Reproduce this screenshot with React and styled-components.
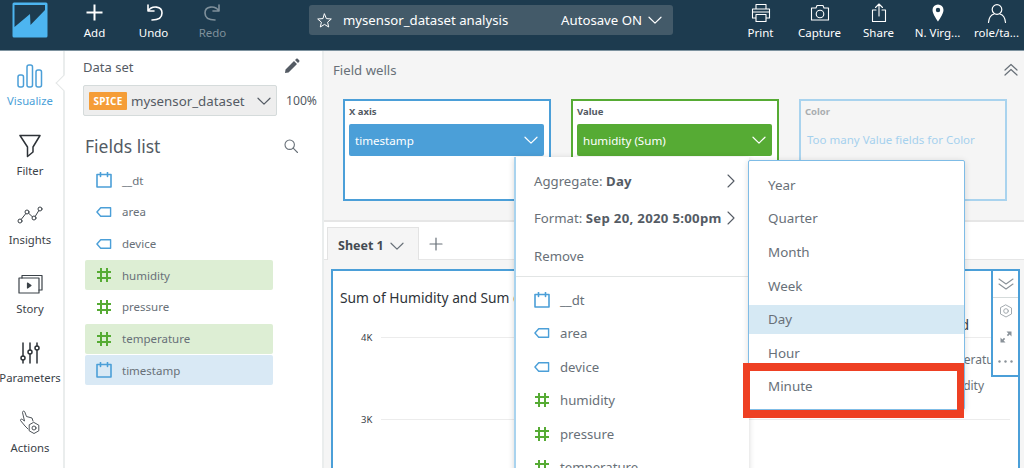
import React from 'react';
import styled, { createGlobalStyle } from 'styled-components';

const GlobalStyle = createGlobalStyle`
  html, body {
    margin: 0;
    padding: 0;
    width: 1024px;
    height: 468px;
    overflow: hidden;
    background: #fff;
    font-family: "Noto Sans", "Open Sans", sans-serif;
    color: #545b64;
  }
  * { box-sizing: border-box; }
`;

const Svg = ({ w, h, vb, children, color = 'currentColor', sw = 1.5 }) => (
  <svg width={w} height={h} viewBox={vb || `0 0 ${w} ${h}`} fill="none" stroke={color} strokeWidth={sw} strokeLinecap="round" strokeLinejoin="round">
    {children}
  </svg>
);

const Chevron = ({ size = 14, color = '#545b64', sw = 1.2 }) => (
  <Svg w={size} h={size} color={color} sw={sw}>
    <path d={`M1 ${size * 0.3} L${size / 2} ${size * 0.72} L${size - 1} ${size * 0.3}`} />
  </Svg>
);

const RightChevron = () => (
  <Svg w={8} h={14} color="#545b64" sw={1.1}>
    <path d="M1 1 L7 7 L1 13" />
  </Svg>
);

const CalendarIcon = () => (
  <Svg w={16} h={16} color="#4b9fd8" sw={1.6}>
    <path d="M1 2.5 H15 V15 H1 Z M4.5 .5 V4.5 M11.5 .5 V4.5" />
  </Svg>
);

const TagIcon = () => (
  <Svg w={17} h={12} color="#4b9fd8" sw={1.5}>
    <path d="M5 1.5 H15.5 V10.5 H5 L1 6 Z" />
  </Svg>
);

const HashIcon = () => (
  <Svg w={16} h={16} color="#56ab34" sw={2}>
    <path d="M5 1 V15 M11 1 V15 M1 5 H15 M1 11 H15" strokeLinecap="butt" />
  </Svg>
);

const FIELD_ICONS = { date: CalendarIcon, tag: TagIcon, num: HashIcon };

const FIELDS = [
  { name: '__dt', type: 'date' },
  { name: 'area', type: 'tag' },
  { name: 'device', type: 'tag' },
  { name: 'humidity', type: 'num', tint: 'green' },
  { name: 'pressure', type: 'num' },
  { name: 'temperature', type: 'num', tint: 'green' },
  { name: 'timestamp', type: 'date', tint: 'blue' },
];

const Page = styled.div`
  position: relative;
  width: 1024px;
  height: 468px;
  overflow: hidden;
  display: flex;
  flex-direction: column;
`;

/* top bar */
const Header = styled.header`
  height: 51px;
  flex: none;
  background: #1d3b4f;
  border-bottom: 1px solid #7d929f;
  display: flex;
  align-items: flex-start;
  padding-left: 12px;
  color: #fff;
`;

const Logo = styled.div`
  width: 36px;
  height: 36px;
  margin-top: 2px;
  margin-right: 17px;
  flex: none;
`;

const ToolButton = styled.div`
  width: 59px;
  flex: none;
  height: 50px;
  display: flex;
  flex-direction: column;
  align-items: center;
  font-size: 11.5px;
  white-space: nowrap;
  color: ${p => (p.$muted ? '#7f909b' : '#fff')};
`;

const ToolIcon = styled.div`
  height: 25px;
  display: flex;
  align-items: center;
  justify-content: center;
`;

const TitlePill = styled.div`
  width: 364px;
  height: 30px;
  margin: 5px 58px 0 67px;
  flex: none;
  background: #435a69;
  border-radius: 3px;
  display: flex;
  align-items: center;
  padding: 0 11px 0 8px;
  font-size: 13.2px;
`;

const TitleName = styled.span`
  margin-left: 11px;
  flex: 1;
`;

const AutoSave = styled.span`
  display: flex;
  align-items: center;
  gap: 6px;
`;

/* body */
const Body = styled.div`
  flex: 1;
  display: flex;
  min-height: 0;
`;

const Sidebar = styled.nav`
  position: relative;
  width: 65px;
  flex: none;
  padding-right: 3px;
  border-right: 2px solid #eaeded;
`;

const NavItem = styled.div`
  position: relative;
  height: 69.3px;
  display: flex;
  flex-direction: column;
  align-items: center;
  justify-content: flex-end;
  padding-bottom: 12px;
  font-size: 11.3px;
  white-space: nowrap;
  color: ${p => (p.$active ? '#4b9fd8' : '#3b4248')};
  ${p => p.$active && `
    &::after {
      content: '';
      position: absolute;
      right: -10px;
      top: 26px;
      width: 11px;
      height: 11px;
      background: #fff;
      border-left: 1px solid #e3e6e6;
      border-bottom: 1px solid #e3e6e6;
      transform: rotate(45deg);
    }
  `}
`;

const NavIcon = styled.div`
  height: 34px;
  display: flex;
  align-items: center;
  justify-content: center;
`;

const DataPanel = styled.aside`
  width: 257px;
  flex: none;
  padding: 6px 5px 0 18px;
`;

const PanelRow = styled.div`
  display: flex;
  align-items: center;
  justify-content: space-between;
  margin-top: ${p => p.$top || 0}px;
`;

const PanelLabel = styled.span`
  font-size: 13px;
  color: #545b64;
  line-height: 20px;
`;

const EditIcon = styled.div`
  margin-right: 17px;
  height: 20px;
`;

const DatasetSelect = styled.div`
  width: 194px;
  height: 31px;
  background: #eeeeee;
  border: 1px solid #d5dbdb;
  border-radius: 2px;
  display: flex;
  align-items: center;
  padding: 0 5px;
  font-size: 13.3px;
  white-space: nowrap;
`;

const Spice = styled.span`
  background: #f59d37;
  color: #fff;
  font-size: 10px;
  font-weight: 700;
  letter-spacing: .3px;
  width: 38px;
  height: 18px;
  border-radius: 1px;
  display: flex;
  align-items: center;
  justify-content: center;
  margin-right: 4px;
  flex: none;
`;

const SelectName = styled.span`
  flex: 1;
`;

const Percent = styled.span`
  font-size: 12.2px;
`;

const FieldsHead = styled.div`
  display: flex;
  align-items: center;
  justify-content: space-between;
  padding: 15px 19px 0 2px;
  margin-bottom: 4.3px;
`;

const FieldsTitle = styled.h2`
  margin: 0;
  font-size: 17.5px;
  font-weight: 400;
  color: #545b64;
  line-height: 30px;
`;

const FieldRow = styled.div`
  height: ${p => p.$h || 30}px;
  width: ${p => p.$w || 188}px;
  margin: ${p => (p.$gap === undefined ? 1.67 : p.$gap)}px 0 0 ${p => (p.$left === undefined ? 2 : p.$left)}px;
  padding-left: ${p => (p.$pad === undefined ? 11 : p.$pad)}px;
  display: flex;
  align-items: center;
  gap: 10px;
  font-size: ${p => p.$fs || 11.5}px;
  border-radius: 2px;
  color: #687078;
  white-space: nowrap;
  background: ${p => (p.$tint === 'green' ? '#ddeed4' : p.$tint === 'blue' ? '#d9e9f5' : 'transparent')};
`;

const FieldIconBox = styled.span`
  width: 16px;
  display: flex;
  justify-content: center;
  flex: none;
`;

/* main column */
const Main = styled.main`
  flex: 1;
  display: flex;
  flex-direction: column;
  min-width: 0;
  background: #f5f5f5;
  border-left: 2px solid #eaeded;
`;

const Wells = styled.section`
  height: 171px;
  flex: none;
  padding: 9px 6px 0 9px;
  border-bottom: 2px solid #e6e6e6;
`;

const WellsHead = styled.div`
  display: flex;
  align-items: center;
  justify-content: space-between;
  height: 20px;
  margin-bottom: 19px;
  font-size: 13.2px;
  color: #687078;
`;

const WellsRow = styled.div`
  display: flex;
  gap: 20px;
  padding-left: 10px;
`;

const Well = styled.div`
  width: 208px;
  height: 102px;
  border: 2px solid ${p => p.$color};
  background: ${p => (p.$ghost ? 'transparent' : '#fff')};
  padding: 4px 4px;
`;

const WellLabel = styled.div`
  font-size: 9.5px;
  font-weight: 700;
  line-height: 13px;
  color: ${p => (p.$ghost ? '#a9adb0' : '#545b64')};
`;

const WellPill = styled.div`
  margin-top: 6px;
  height: 32px;
  width: 195px;
  border-radius: 2px;
  background: ${p => p.$color};
  color: #fff;
  display: flex;
  align-items: center;
  justify-content: space-between;
  padding: 0 6px;
  font-size: 11.6px;
`;

const WellHint = styled.div`
  margin-top: 14px;
  padding-left: 2px;
  font-size: 11.5px;
  color: #a5d1ee;
`;

const SheetBar = styled.div`
  height: 38px;
  flex: none;
  background: #fff;
  border-bottom: 1px solid #e6e6e6;
  padding: 5px 0 0 3px;
  display: flex;
  align-items: flex-start;
`;

const SheetTab = styled.div`
  width: 92px;
  height: 33px;
  background: #f5f5f5;
  border: 1px solid #e3e3e3;
  border-bottom: none;
  display: flex;
  align-items: center;
  padding: 3px 0 0 10px;
  gap: 6px;
  font-size: 12.5px;
  font-weight: 700;
  color: #444b52;
`;

const AddSheet = styled.div`
  margin: 7px 0 0 10px;
`;

const Canvas = styled.div`
  flex: 1;
  padding: 9px 4px 0 7px;
  min-height: 0;
`;

const ChartCard = styled.div`
  position: relative;
  height: 230px;
  background: #fff;
  border: 2px solid #4b9fd8;
  padding: 15px 8px 0 7px;
`;

const ChartTitle = styled.div`
  font-size: 13.8px;
  line-height: 24px;
  color: #2e3338;
  white-space: nowrap;
  width: 174px;
  overflow: hidden;
`;

const GridLine = styled.div`
  display: flex;
  align-items: center;
  gap: 9px;
  height: 12px;
  margin-top: ${p => p.$top}px;
  padding-left: 21px;
  font-size: 9.5px;
  color: #3b4248;
  &::after {
    content: '';
    flex: 1;
    height: 1px;
    background: #ececec;
  }
`;

const Legend = styled.div`
  position: absolute;
  left: 601px;
  top: 41px;
  font-size: 12px;
  line-height: 26px;
  color: #687078;
  white-space: nowrap;
`;

const LegendTitle = styled.div`
  margin: 0 0 9px -14px;
  font-size: 14px;
  color: #3b4248;
`;

const ChartTools = styled.div`
  position: absolute;
  top: -2px;
  right: -2px;
  width: 29px;
  height: 108px;
  background: #fff;
  border: 2px solid #4b9fd8;
  display: flex;
  flex-direction: column;
  align-items: center;
`;

const ToolSlot = styled.div`
  width: 100%;
  height: ${p => p.$h}px;
  display: flex;
  align-items: center;
  justify-content: center;
  border-bottom: ${p => (p.$rule ? '1px solid #d5dbdb' : 'none')};
`;

/* floating menus */
const FieldMenu = styled.div`
  position: absolute;
  left: 514px;
  top: 157px;
  width: 235px;
  height: 320px;
  background: #fff;
  border-left: 2px solid #a9d3ee;
  box-shadow: 0 1px 6px rgba(0, 0, 0, .16);
`;

const MenuTop = styled.div`
  height: 120px;
  border-bottom: 1px solid #e2e5e5;
  padding-top: 5px;
`;

const MenuRow = styled.div`
  height: 37.5px;
  padding: 0 14px 0 18px;
  display: flex;
  align-items: center;
  justify-content: space-between;
  font-size: 13.2px;
  color: #687078;
  white-space: nowrap;
  b {
    color: #545b64;
    font-weight: 700;
    letter-spacing: .3px;
  }
`;

const MenuFields = styled.div`
  padding-top: 6px;
`;

const SubMenu = styled.div`
  position: absolute;
  left: 748px;
  top: 160px;
  width: 217px;
  height: 250px;
  background: #fff;
  border: 1px solid #7fbce6;
  border-radius: 2px;
  padding-top: 7px;
  box-shadow: 0 1px 6px rgba(0, 0, 0, .14);
`;

const SubItem = styled.div`
  height: ${p => (p.$active ? 29 : 33.6)}px;
  margin: ${p => (p.$active ? '2.3px 0' : 0)};
  padding-left: 19px;
  display: flex;
  align-items: center;
  font-size: 13.4px;
  color: #687078;
  background: ${p => (p.$active ? '#d6e9f4' : 'transparent')};
`;

const Highlight = styled.div`
  position: absolute;
  left: 743px;
  top: 363px;
  width: 221px;
  height: 55px;
  border: 7px solid #ee4023;
  border-top-width: 8px;
  border-bottom-width: 8px;
  pointer-events: none;
`;

const LogoMark = () => (
  <svg width="36" height="36" viewBox="0 0 36 36">
    <rect x=".5" y=".5" width="35" height="35" rx="1.5" fill="#4db5f0" />
    <path d="M2.5 3 H33 V8 L18.5 23 L18 12 L2.5 25 Z" fill="#1d3b4f" />
  </svg>
);

const NAV = [
  {
    label: 'Visualize',
    active: true,
    icon: (
      <Svg w={26} h={24} color="#4b9fd8" sw={1.5}>
        <rect x="1" y="11" width="5.5" height="12" rx="2" />
        <rect x="10" y="1" width="5.5" height="22" rx="2" />
        <rect x="19" y="6" width="5.5" height="17" rx="2" />
      </Svg>
    ),
  },
  {
    label: 'Filter',
    icon: (
      <Svg w={22} h={24} color="#2e3338" sw={1.5}>
        <path d="M1 1.5 H21 L14 13 V18 L8.5 22.5 V13 Z" />
      </Svg>
    ),
  },
  {
    label: 'Insights',
    icon: (
      <Svg w={26} h={18} color="#3b4248" sw={1}>
        <circle cx="3" cy="15" r="2" />
        <circle cx="10" cy="6" r="2" />
        <circle cx="17" cy="12" r="2" />
        <circle cx="23" cy="3" r="2" />
        <path d="M4.2 13.4 L8.8 7.6 M11.6 7.2 L15.4 10.8 M18.2 10.4 L21.8 4.6" />
      </Svg>
    ),
  },
  {
    label: 'Story',
    icon: (
      <Svg w={25} h={20} color="#3b4248" sw={1.2}>
        <rect x="1" y="4" width="20" height="15" />
        <path d="M4 4 V1.5 H24 V16 H21" />
        <path d="M9.5 9 L13 11.5 L9.5 14 Z" fill="#3b4248" />
      </Svg>
    ),
  },
  {
    label: 'Parameters',
    icon: (
      <Svg w={20} h={22} color="#2e3338" sw={1.5}>
        <path d="M3 1 V14 M3 18 V21 M10 1 V8 M10 12 V21 M17 1 V4 M17 8 V21" />
        <circle cx="3" cy="16" r="2" />
        <circle cx="10" cy="10" r="2" />
        <circle cx="17" cy="6" r="2" />
      </Svg>
    ),
  },
  {
    label: 'Actions',
    icon: (
      <Svg w={22} h={25} color="#3b4248" sw={.9}>
        <path d="M9 19 L6 16 L1.5 10.5 C1 9.5 2.5 8.5 3.5 9.5 L5.5 11 L3.5 2.5 C3.3 1 5.3 .5 5.8 2 L7.5 6.5 L13 8 L14 11" />
        <circle cx="15" cy="18" r="2" />
        <path d="M15 12.5 L19.8 15.2 V20.8 L15 23.5 L10.2 20.8 V15.2 Z" />
      </Svg>
    ),
  },
];

const HEADER_LEFT = [
  { label: 'Add', icon: <Svg w={17} h={17} sw={2}><path d="M8.5 .5 V16.5 M.5 8.5 H16.5" strokeLinecap="butt" /></Svg> },
  { label: 'Undo', icon: <Svg w={20} h={20} sw={1.6}><path d="M4 2 V8 H10 M4 8 C8 2 18 3 18 10 C18 15 14 17 8 17" /></Svg> },
  { label: 'Redo', muted: true, icon: <Svg w={20} h={20} color="#7f909b" sw={1.6}><path d="M16 2 V8 H10 M16 8 C12 2 2 3 2 10 C2 15 6 17 12 17" /></Svg> },
];

const HEADER_RIGHT = [
  { label: 'Print', icon: <Svg w={20} h={20} sw={1.1}><path d="M5 6 V1.5 H15 V6 M5 15 H1.5 V6 H18.5 V15 H15 M5 11.5 H15 V18.5 H5 Z M1.5 9 H18.5" /></Svg> },
  { label: 'Capture', icon: <Svg w={20} h={18} sw={1.1}><path d="M1.5 4 H6 L7 1.5 H13 L14 4 H18.5 V16 H1.5 Z" /><circle cx="10" cy="10" r="3.8" /></Svg> },
  { label: 'Share', icon: <Svg w={16} h={20} sw={1.1}><path d="M5 7 H1.5 V18.5 H14.5 V7 H11 M8 13 V1 M4.5 4.5 L8 1 L11.5 4.5" /></Svg> },
  { label: 'N. Virg...', icon: <svg width="12" height="18" viewBox="0 0 12 18"><path fillRule="evenodd" fill="#fff" d="M6 .5 A5.5 5.5 0 0 1 11.5 6 C11.5 10 6 17.5 6 17.5 C6 17.5 .5 10 .5 6 A5.5 5.5 0 0 1 6 .5 Z M6 3.8 A2.2 2.2 0 1 0 6 8.2 A2.2 2.2 0 1 0 6 3.8 Z" /></svg> },
  { label: 'role/ta...', icon: <Svg w={20} h={20} sw={1.2}><circle cx="10" cy="6.5" r="4.8" /><path d="M1.5 19.5 C2 14 5 11.5 7 11 M18.5 19.5 C18 14 15 11.5 13 11" /></Svg> },
];

const PERIODS = ['Year', 'Quarter', 'Month', 'Week', 'Day', 'Hour', 'Minute'];

const App = () => (
  <Page>
    <GlobalStyle />
    <Header>
      <Logo><LogoMark /></Logo>
      {HEADER_LEFT.map(b => (
        <ToolButton key={b.label} $muted={b.muted}>
          <ToolIcon>{b.icon}</ToolIcon>
          {b.label}
        </ToolButton>
      ))}
      <TitlePill>
        <Svg w={15} h={15} color="#fff" sw={1}>
          <path d="M7.5 1 L9.4 5.6 L14.3 6 L10.6 9.2 L11.7 14 L7.5 11.4 L3.3 14 L4.4 9.2 L.7 6 L5.6 5.6 Z" />
        </Svg>
        <TitleName>mysensor_dataset analysis</TitleName>
        <AutoSave>Autosave ON <Chevron color="#fff" /></AutoSave>
      </TitlePill>
      {HEADER_RIGHT.map(b => (
        <ToolButton key={b.label}>
          <ToolIcon>{b.icon}</ToolIcon>
          {b.label}
        </ToolButton>
      ))}
    </Header>
    <Body>
      <Sidebar>
        {NAV.map(n => (
          <NavItem key={n.label} $active={n.active}>
            <NavIcon>{n.icon}</NavIcon>
            {n.label}
          </NavItem>
        ))}
      </Sidebar>
      <DataPanel>
        <PanelRow>
          <PanelLabel>Data set</PanelLabel>
          <EditIcon>
            <svg width="16" height="16" viewBox="0 0 16 16">
              <path fill="#545b64" d="M1 15 L1.5 11.5 L10 3 L13 6 L4.5 14.5 Z M11 2 L12.3 .8 C12.7 .4 13.3 .4 13.7 .8 L15.2 2.3 C15.6 2.7 15.6 3.3 15.2 3.7 L14 5 Z" />
            </svg>
          </EditIcon>
        </PanelRow>
        <PanelRow $top={8}>
          <DatasetSelect>
            <Spice>SPICE</Spice>
            <SelectName>mysensor_dataset</SelectName>
            <Chevron />
          </DatasetSelect>
          <Percent>100%</Percent>
        </PanelRow>
        <FieldsHead>
          <FieldsTitle>Fields list</FieldsTitle>
          <Svg w={14} h={14} color="#687078" sw={1.1}>
            <circle cx="5.7" cy="5.7" r="4.7" />
            <path d="M9.2 9.2 L13.5 13.5" />
          </Svg>
        </FieldsHead>
        {FIELDS.map(f => {
          const Icon = FIELD_ICONS[f.type];
          return (
            <FieldRow key={f.name} $tint={f.tint}>
              <FieldIconBox><Icon /></FieldIconBox>
              {f.name}
            </FieldRow>
          );
        })}
      </DataPanel>
      <Main>
        <Wells>
          <WellsHead>
            Field wells
            <Svg w={14} h={14} color="#687078" sw={1.2}>
              <path d="M1 7 L7 1.5 L13 7 M1 12 L7 6.5 L13 12" />
            </Svg>
          </WellsHead>
          <WellsRow>
            <Well $color="#4b9fd8">
              <WellLabel>X axis</WellLabel>
              <WellPill $color="#4b9fd8">timestamp <Chevron color="#fff" /></WellPill>
            </Well>
            <Well $color="#56ab34">
              <WellLabel>Value</WellLabel>
              <WellPill $color="#56ab34">humidity (Sum) <Chevron color="#fff" /></WellPill>
            </Well>
            <Well $color="#a9d3ee" $ghost>
              <WellLabel $ghost>Color</WellLabel>
              <WellHint>Too many Value fields for Color</WellHint>
            </Well>
          </WellsRow>
        </Wells>
        <SheetBar>
          <SheetTab>Sheet 1 <Chevron color="#687078" /></SheetTab>
          <AddSheet>
            <Svg w={14} h={14} color="#687078" sw={1.2}><path d="M7 1 V13 M1 7 H13" /></Svg>
          </AddSheet>
        </SheetBar>
        <Canvas>
          <ChartCard>
            <ChartTitle>Sum of Humidity and Sum of Pressure</ChartTitle>
            <GridLine $top={21}>4K</GridLine>
            <GridLine $top={70}>3K</GridLine>
            <Legend>
              <LegendTitle>Legend</LegendTitle>
              temperature<br />humidity
            </Legend>
            <ChartTools>
              <ToolSlot $h={27} $rule>
                <Svg w={16} h={14} color="#8a9299" sw={1.1}><path d="M1 2 L8 7 L15 2 M1 7 L8 12 L15 7" /></Svg>
              </ToolSlot>
              <ToolSlot $h={26}>
                <Svg w={14} h={14} color="#9aa1a7" sw={.9}>
                  <path d="M7 1 L12.5 4 V10 L7 13 L1.5 10 V4 Z" />
                  <circle cx="7" cy="7" r="2.3" />
                </Svg>
              </ToolSlot>
              <ToolSlot $h={26}>
                <svg width="12" height="12" viewBox="0 0 12 12">
                  <path fill="#8a9299" d="M.5 11.5 V6.5 L2.4 8.4 L4 6.8 L5.2 8 L3.6 9.6 L5.5 11.5 Z M11.5 .5 V5.5 L9.6 3.6 L8 5.2 L6.8 4 L8.4 2.4 L6.5 .5 Z" />
                </svg>
              </ToolSlot>
              <ToolSlot $h={22}>
                <svg width="15" height="3" viewBox="0 0 15 3"><g fill="#8a9299"><circle cx="1.5" cy="1.5" r="1.2" /><circle cx="7.5" cy="1.5" r="1.2" /><circle cx="13.5" cy="1.5" r="1.2" /></g></svg>
              </ToolSlot>
            </ChartTools>
          </ChartCard>
        </Canvas>
      </Main>
    </Body>
    <FieldMenu>
      <MenuTop>
        <MenuRow><span>Aggregate: <b>Day</b></span><RightChevron /></MenuRow>
        <MenuRow><span>Format: <b>Sep 20, 2020 5:00pm</b></span><RightChevron /></MenuRow>
        <MenuRow>Remove</MenuRow>
      </MenuTop>
      <MenuFields>
        {FIELDS.slice(0, 6).map(f => {
          const Icon = FIELD_ICONS[f.type];
          return (
            <FieldRow key={f.name} $h={33.5} $w={220} $gap={0} $left={0} $pad={18} $fs={13.2}>
              <FieldIconBox><Icon /></FieldIconBox>
              {f.name}
            </FieldRow>
          );
        })}
      </MenuFields>
    </FieldMenu>
    <SubMenu>
      {PERIODS.map(p => (
        <SubItem key={p} $active={p === 'Day'}>{p}</SubItem>
      ))}
    </SubMenu>
    <Highlight />
  </Page>
);

export default App;
